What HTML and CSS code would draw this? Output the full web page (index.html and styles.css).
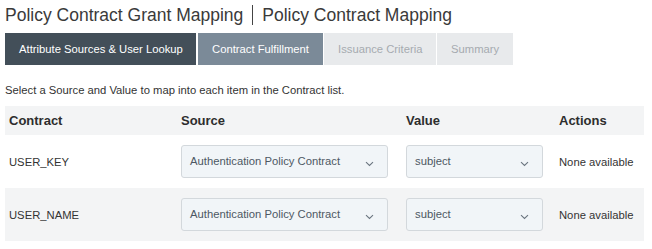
FILE: index.html
```html
<!DOCTYPE html>
<html>
<head>
<meta charset="utf-8">
<link rel="stylesheet" href="styles.css">
</head>
<body>
<div class="page">
  <h1 class="title"><span>Policy Contract Grant Mapping</span><span class="sep"></span><span>Policy Contract Mapping</span></h1>
  <div class="tabs">
    <div class="tab done">Attribute Sources &amp; User Lookup</div>
    <div class="tab active">Contract Fulfillment</div>
    <div class="tab disabled">Issuance Criteria</div>
    <div class="tab disabled summary">Summary</div>
  </div>
  <p class="desc">Select a Source and Value to map into each item in the Contract list.</p>
  <div class="table">
    <div class="row head">
      <div class="cell">Contract</div>
      <div class="cell">Source</div>
      <div class="cell">Value</div>
      <div class="cell">Actions</div>
    </div>
    <div class="row">
      <div class="cell">USER_KEY</div>
      <div class="cell"><div class="select src"><span>Authentication Policy Contract</span><svg width="9" height="6" viewBox="0 0 9 6"><path d="M1 1.2 L4.5 4.5 L8 1.2" fill="none" stroke="#6b7680" stroke-width="1.1"/></svg></div></div>
      <div class="cell"><div class="select val"><span>subject</span><svg width="9" height="6" viewBox="0 0 9 6"><path d="M1 1.2 L4.5 4.5 L8 1.2" fill="none" stroke="#6b7680" stroke-width="1.1"/></svg></div></div>
      <div class="cell">None available</div>
    </div>
    <div class="row alt">
      <div class="cell">USER_NAME</div>
      <div class="cell"><div class="select src"><span>Authentication Policy Contract</span><svg width="9" height="6" viewBox="0 0 9 6"><path d="M1 1.2 L4.5 4.5 L8 1.2" fill="none" stroke="#6b7680" stroke-width="1.1"/></svg></div></div>
      <div class="cell"><div class="select val"><span>subject</span><svg width="9" height="6" viewBox="0 0 9 6"><path d="M1 1.2 L4.5 4.5 L8 1.2" fill="none" stroke="#6b7680" stroke-width="1.1"/></svg></div></div>
      <div class="cell">None available</div>
    </div>
  </div>
</div>
</body>
</html>
```
FILE: styles.css
```css
html, body { margin: 0; padding: 0; background: #fff; }
body { font-family: "Liberation Sans", Arial, sans-serif; color: #333; }
.page { padding: 5px 8px 0 5px; }
.title {
  margin: 0;
  font-size: 17.5px;
  line-height: 20px;
  font-weight: normal;
  color: #3a3a3a;
  display: flex;
  align-items: center;
}
.sep {
  display: inline-block;
  width: 1px;
  height: 20px;
  background: #444;
  margin: 0 9px 0 9px;
}
.tabs { display: flex; gap: 1px; margin-top: 8px; height: 32px; }
.tab {
  font-size: 11.25px;
  line-height: 32px;
  padding: 0 14px;
  white-space: nowrap;
}
.tab.done { background: #434f59; color: #fff; width: 163px; text-align: center; }
.tab.active { background: #7b8a98; color: #fff; width: 97px; text-align: center; border-left: 1px solid #fff; }
.tab.disabled { background: #e8eaec; color: #a6abb0; width: 84px; text-align: center; }
.tab.summary { width: 48px; }
.desc { margin: 18px 0 0; font-size: 11.25px; line-height: 14px; color: #333; }
.table { margin-top: 9px; width: 639px; }
.row { display: grid; grid-template-columns: 172px 225px 153px 89px; height: 53px; align-items: center; }
.row.head { height: 29px; background: #f3f4f5; font-weight: bold; color: #2d2d2d; }
.row.alt { background: #f3f4f5; }
.cell { padding-left: 4px; font-size: 11.25px; }
.row.head .cell { font-size: 13px; }
.select {
  box-sizing: border-box;
  height: 33px;
  background: #f1f5f8;
  border: 1px solid #d3d8dc;
  border-radius: 3px;
  display: flex;
  align-items: center;
  justify-content: space-between;
  padding: 0 13px 0 8px;
  color: #4d5863;
  font-size: 11.25px;
}
.select span { margin-top: -2px; }
.select svg { margin-top: 4px; }
.select.src { width: 207px; }
.select.val { width: 137px; }
```
